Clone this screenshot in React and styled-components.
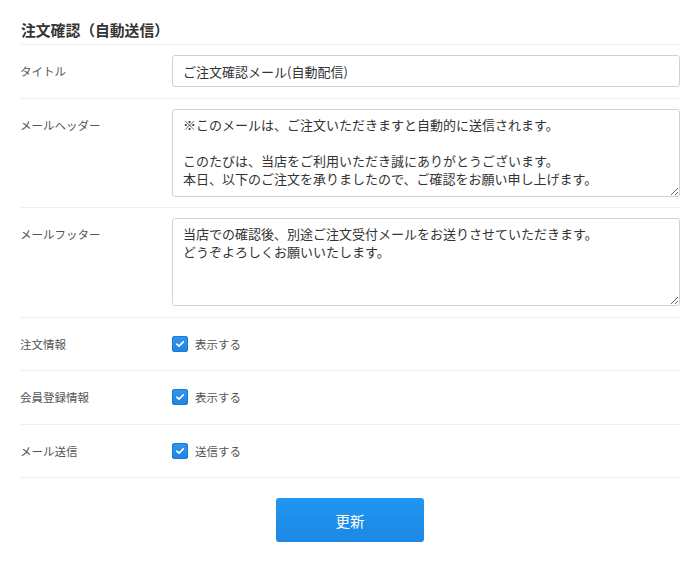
import React from "react";
import styled, { createGlobalStyle } from "styled-components";

const Global = createGlobalStyle`
  html, body { margin: 0; padding: 0; background: #fff; }
  body {
    font-family: "Noto Sans CJK JP", "Noto Sans", sans-serif;
    color: #333;
  }
`;

const Page = styled.div`
  width: 700px;
  box-sizing: border-box;
  padding: 20px 20px 24px;
`;

const Title = styled.h2`
  margin: 0;
  font-size: 14.8px;
  font-weight: 700;
  line-height: 20px;
  color: #333;
  padding: 0 0 4px 1px;
  border-bottom: 1px solid #efefef;
`;

const Row = styled.div`
  display: grid;
  grid-template-columns: 152px 1fr;
  align-items: start;
  padding: 10px 0 10.5px;
  border-bottom: 1px solid #efefef;
`;

const Label = styled.div`
  font-size: 11.5px;
  line-height: 32px;
  height: 32px;
  color: #555;
`;

const Input = styled.input`
  box-sizing: border-box;
  width: 100%;
  height: 32px;
  padding: 0 10px;
  border: 1px solid #d2d2d2;
  border-radius: 3px;
  font-family: inherit;
  font-size: 13px;
  color: #333;
  outline: none;
`;

const Area = styled.textarea`
  box-sizing: border-box;
  display: block;
  width: 100%;
  height: 88px;
  padding: 6px 10px;
  border: 1px solid #d2d2d2;
  border-radius: 3px;
  font-family: inherit;
  font-size: 13px;
  line-height: 18.3px;
  color: #333;
  outline: none;
  resize: vertical;
`;

const CheckWrap = styled.label`
  display: flex;
  align-items: center;
  gap: 7px;
  height: 32px;
  font-size: 11.5px;
  color: #555;
`;

const Box = styled.span`
  width: 16px;
  height: 16px;
  border-radius: 3px;
  background: linear-gradient(#3197f0, #1f83e2);
  box-shadow: inset 0 0 0 1px #1b7bd6;
  display: flex;
  align-items: center;
  justify-content: center;
`;

const Actions = styled.div`
  display: flex;
  justify-content: center;
  padding-top: 20px;
`;

const Button = styled.button`
  width: 148px;
  height: 44px;
  border: none;
  border-radius: 3px;
  background: linear-gradient(#2196f3, #1d87e4);
  color: #fff;
  font-family: inherit;
  font-size: 14.5px;
  cursor: pointer;
`;

const Check = ({ children }) => (
  <CheckWrap>
    <Box>
      <svg width="10" height="10" viewBox="0 0 10 10">
        <path d="M1.8 5.2 L4 7.2 L8.3 2.8" fill="none" stroke="#fff" strokeWidth="1.7" strokeLinecap="round" strokeLinejoin="round" />
      </svg>
    </Box>
    {children}
  </CheckWrap>
);

export default function App() {
  return (
    <Page>
      <Global />
      <Title>注文確認（自動送信）</Title>
      <Row>
        <Label>タイトル</Label>
        <Input defaultValue="ご注文確認メール(自動配信)" />
      </Row>
      <Row>
        <Label>メールヘッダー</Label>
        <Area
          defaultValue={"※このメールは、ご注文いただきますと自動的に送信されます。\n\nこのたびは、当店をご利用いただき誠にありがとうございます。\n本日、以下のご注文を承りましたので、ご確認をお願い申し上げます。"}
        />
      </Row>
      <Row>
        <Label>メールフッター</Label>
        <Area
          defaultValue={"当店での確認後、別途ご注文受付メールをお送りさせていただきます。\nどうぞよろしくお願いいたします。"}
        />
      </Row>
      <Row>
        <Label>注文情報</Label>
        <Check>表示する</Check>
      </Row>
      <Row>
        <Label>会員登録情報</Label>
        <Check>表示する</Check>
      </Row>
      <Row>
        <Label>メール送信</Label>
        <Check>送信する</Check>
      </Row>
      <Actions>
        <Button>更新</Button>
      </Actions>
    </Page>
  );
}
